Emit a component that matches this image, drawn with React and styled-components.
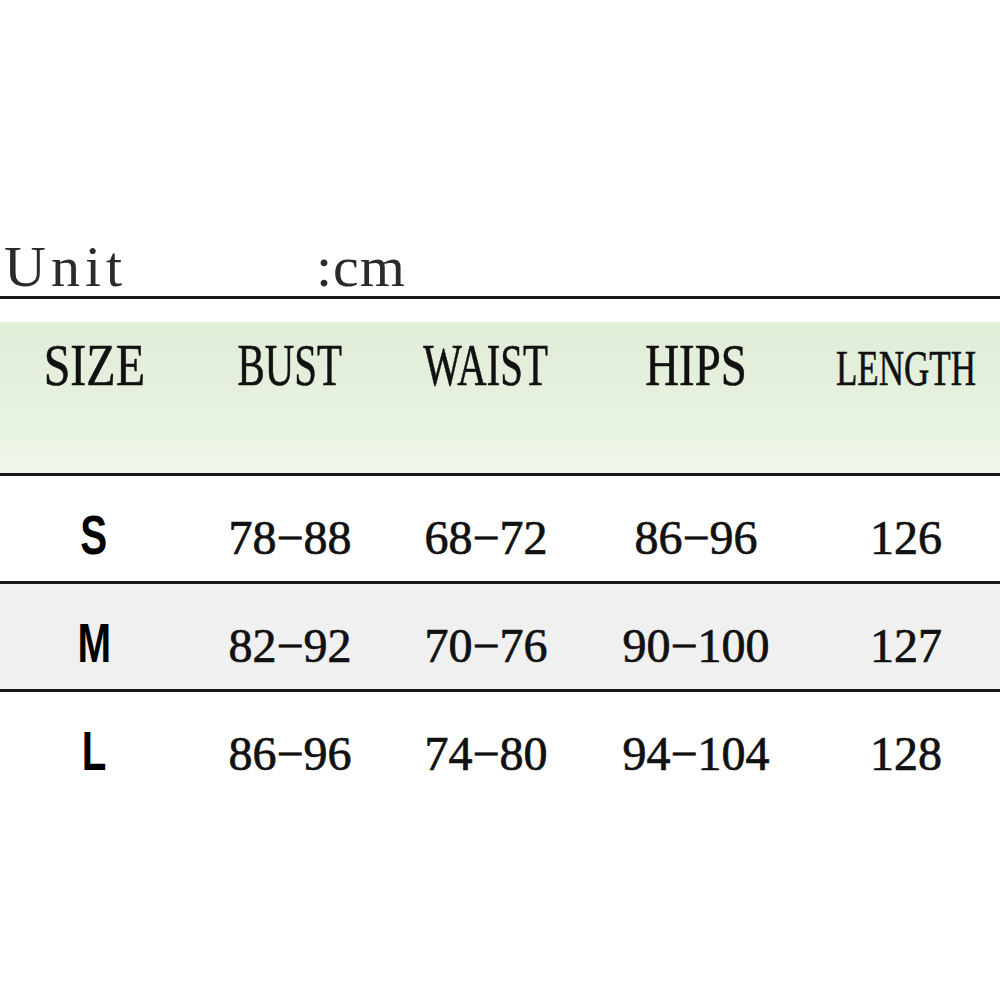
import React from "react";
import styled, { createGlobalStyle } from "styled-components";

const GlobalStyle = createGlobalStyle`
  html, body {
    margin: 0;
    padding: 0;
    background: #ffffff;
  }
`;

const columns = "188px 204px 188px 232px 188px";

const headers = [
  { label: "SIZE", scale: 0.8 },
  { label: "BUST", scale: 0.68 },
  { label: "WAIST", scale: 0.68 },
  { label: "HIPS", scale: 0.78 },
  { label: "LENGTH", scale: 0.7, small: true },
];

const rows = [
  { size: "S", values: ["78−88", "68−72", "86−96", "126"] },
  { size: "M", values: ["82−92", "70−76", "90−100", "127"], shaded: true },
  { size: "L", values: ["86−96", "74−80", "94−104", "128"], last: true },
];

const SizeChart = () => {
  return (
    <Page>
      <GlobalStyle />
      <UnitBar>
        <UnitLabel>Unit</UnitLabel>
        <UnitValue>:cm</UnitValue>
      </UnitBar>
      <Table>
        <HeaderRow>
          {headers.map((h) => (
            <Cell key={h.label}>
              <HeaderText $scale={h.scale} $small={h.small}>
                {h.label}
              </HeaderText>
            </Cell>
          ))}
        </HeaderRow>
        {rows.map((r) => (
          <DataRow key={r.size} $shaded={r.shaded} $last={r.last}>
            <Cell>
              <SizeLetter>{r.size}</SizeLetter>
            </Cell>
            {r.values.map((v, i) => (
              <Cell key={i}>
                <Value>{v}</Value>
              </Cell>
            ))}
          </DataRow>
        ))}
      </Table>
    </Page>
  );
};

const Page = styled.div`
  width: 1000px;
  height: 1000px;
  overflow: hidden;
  background: #ffffff;
  padding-top: 238px;
  box-sizing: border-box;
`;

const UnitBar = styled.div`
  display: flex;
  align-items: baseline;
  height: 58px;
  border-bottom: 3px solid #1a1a1a;
  font-family: "Liberation Serif", "DejaVu Serif", serif;
  font-size: 58px;
  line-height: 58px;
  color: #2b2b2b;
`;

const UnitLabel = styled.span`
  padding-left: 4px;
  width: 312px;
  letter-spacing: 5px;
`;

const UnitValue = styled.span`
  letter-spacing: 1px;
`;

const Table = styled.div`
  margin-top: 23px;
  display: flex;
  flex-direction: column;
`;

const HeaderRow = styled.div`
  display: grid;
  grid-template-columns: ${columns};
  align-items: baseline;
  height: 154px;
  box-sizing: border-box;
  padding-top: 13px;
  background: linear-gradient(180deg, #e0edd7 0%, #e6f1df 55%, #eef7ea 100%);
  border-bottom: 3px solid #1a1a1a;
`;

const DataRow = styled.div`
  display: grid;
  grid-template-columns: ${columns};
  align-items: baseline;
  height: 108px;
  box-sizing: border-box;
  padding-top: 31px;
  background: ${(p) => (p.$shaded ? "#f0f0f0" : "#ffffff")};
  border-bottom: ${(p) => (p.$last ? "none" : "3px solid #1a1a1a")};
`;

const Cell = styled.div`
  display: flex;
  justify-content: center;
  align-items: baseline;
`;

const HeaderText = styled.span`
  display: inline-block;
  font-family: "Liberation Serif", "DejaVu Serif", serif;
  font-size: ${(p) => (p.$small ? "50px" : "60px")};
  line-height: 1;
  color: #111111;
  -webkit-text-stroke: 0.6px #111111;
  transform: scaleX(${(p) => p.$scale});
  white-space: nowrap;
`;

const SizeLetter = styled.span`
  display: inline-block;
  font-family: "Liberation Sans", Arial, sans-serif;
  font-weight: 700;
  font-size: 56px;
  line-height: 1;
  color: #000000;
  transform: scaleX(0.72);
`;

const Value = styled.span`
  font-family: "Liberation Serif", "DejaVu Serif", serif;
  font-size: 48px;
  line-height: 1;
  color: #111111;
  -webkit-text-stroke: 0.7px #111111;
  white-space: nowrap;
`;

export default SizeChart;
